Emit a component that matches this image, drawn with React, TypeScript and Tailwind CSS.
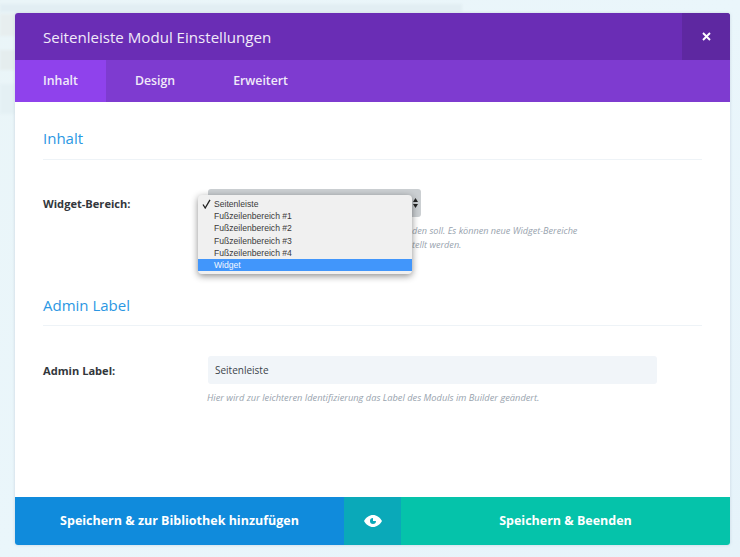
import React from "react";

const font = { fontFamily: '"Open Sans", sans-serif' };

export default function App() {
  return (
    <div
      className="relative h-[557px] w-[740px] overflow-hidden bg-gradient-to-br from-[#eaf5f8] via-[#eaf6fb] to-[#e6f3fa] pt-[13px] pl-[15px]"
      style={font}
    >
      {/* blurred page behind the modal */}
      <div className="absolute left-0 top-[4px] h-[8px] w-[462px] bg-[#e2eef3] blur-[1px]" />
      <div className="absolute left-0 top-[14px] h-[22px] w-[15px] bg-[#e7eeef] blur-[1px]" />
      <div className="absolute left-0 top-[50px] h-[20px] w-[15px] bg-[#e5edee] blur-[1px]" />
      <div className="absolute left-0 top-[84px] h-[30px] w-[15px] bg-[#e4f0f4] blur-[1px]" />

      <div className="relative flex h-[532px] w-[715px] flex-col overflow-hidden rounded-[3px] bg-white shadow-[0_0_3px_rgba(90,110,140,0.25)]">
        {/* Header */}
        <div className="flex h-[47px] shrink-0 items-center justify-between bg-[#6a2db5]">
          <h1 className="pl-[28px] pt-[2px] text-[15.100px] font-normal leading-none text-[#f1eaf9]">
            Seitenleiste Modul Einstellungen
          </h1>
          <div className="flex h-full w-[48px] items-center justify-center bg-[#5e28a1]">
            <svg width="9" height="9" viewBox="0 0 9 9" aria-hidden="true">
              <path d="M1 1l7 7M8 1l-7 7" stroke="#fff" strokeWidth="1.9" fill="none" />
            </svg>
          </div>
        </div>

        {/* Tabs */}
        <div className="flex h-[42px] shrink-0 items-center bg-[#7e3bd0] text-[12.300px] font-semibold text-[#f1eaf9]">
          <div className="flex h-full w-[91px] items-center bg-[#8f42ec] pl-[28px]">Inhalt</div>
          <div className="pl-[29px]">Design</div>
          <div className="pl-[58px]">Erweitert</div>
        </div>

        {/* Body */}
        <div className="flex-1 px-[28px]">
          <h2 className="border-b border-[#eef3f7] pt-[25px] pb-[10px] text-[15px] font-normal leading-[22px] text-[#2b97e3]">
            Inhalt
          </h2>

          <div className="mt-[29px] flex">
            <label className="w-[165px] pt-[7px] text-[11.100px] font-bold leading-[16px] text-[#32373c]">
              Widget-Bereich:
            </label>
            <div className="relative w-[450px]">
              <div className="h-[28px] w-[213px] rounded-[3px] bg-[#cbcfd2]" />
              <svg className="absolute left-[205px] top-[9px]" width="5" height="10" viewBox="0 0 5 10" aria-hidden="true">
                <path d="M2.500 0L5 4H0zM2.500 10L0 6h5z" fill="#222" />
              </svg>
              <p className="mt-[7px] whitespace-nowrap pl-[204px] text-[9.100px] italic leading-[14px] text-[#98a3ae]">
                den soll. Es können neue Widget-Bereiche
                <br />
                tellt werden.
              </p>

              {/* Open select menu */}
              <ul
                className="absolute left-[-10px] top-[6px] w-[214px] rounded-[4px] bg-[#f0f0f0] py-[3px] text-[8.600px] leading-[12.200px] text-[#3a3a3a] shadow-[0_2px_7px_rgba(0,0,0,0.45)]"
                style={{ fontFamily: '"Liberation Sans", sans-serif' }}
              >
                <li className="relative pl-[16px]">
                  <svg className="absolute left-[4px] top-[1px]" width="9" height="10" viewBox="0 0 9 10" aria-hidden="true">
                    <path d="M1 5.500L3.200 9 8 .8" stroke="#222" strokeWidth="1.300" fill="none" />
                  </svg>
                  Seitenleiste
                </li>
                <li className="pl-[16px]">Fußzeilenbereich #1</li>
                <li className="pl-[16px]">Fußzeilenbereich #2</li>
                <li className="pl-[16px]">Fußzeilenbereich #3</li>
                <li className="pl-[16px]">Fußzeilenbereich #4</li>
                <li className="bg-[#4196fb] pl-[16px] text-[#f4f8ff]">Widget</li>
              </ul>
            </div>
          </div>

          <h2 className="mt-[42px] border-b border-[#eef3f7] pb-[9px] text-[15px] font-normal leading-[22px] text-[#2b97e3]">
            Admin Label
          </h2>

          <div className="mt-[30px] flex">
            <label className="w-[165px] pt-[7px] text-[11.100px] font-bold leading-[16px] text-[#32373c]">
              Admin Label:
            </label>
            <div>
              <div className="flex h-[28px] w-[449px] items-center rounded-[3px] bg-[#f1f5f9] pl-[7px] text-[10px] text-[#3c434a]">
                Seitenleiste
              </div>
              <p className="ml-[-1px] mt-[7px] text-[9.270px] italic leading-[14px] text-[#98a3ae]">
                Hier wird zur leichteren Identifizierung das Label des Moduls im Builder geändert.
              </p>
            </div>
          </div>
        </div>

        {/* Footer */}
        <div className="flex h-[48px] shrink-0 text-[12.500px] font-bold text-white">
          <div className="flex w-[329px] items-center justify-center bg-[#108bdc]">
            Speichern &amp; zur Bibliothek hinzufügen
          </div>
          <div className="flex w-[57px] items-center justify-center bg-[#0aa9b9]">
            <svg width="18" height="12" viewBox="0 0 18 12" aria-hidden="true">
              <path
                fillRule="evenodd"
                fill="#fff"
                d="M0 6C2 2.400 5.300 0 9 0s7 2.400 9 6c-2 3.600-5.300 6-9 6S2 9.600 0 6zm9-3a3 3 0 1 0 3 3H9V3z"
              />
            </svg>
          </div>
          <div className="flex flex-1 items-center justify-center bg-[#05c3aa]">Speichern &amp; Beenden</div>
        </div>
      </div>
    </div>
  );
}
